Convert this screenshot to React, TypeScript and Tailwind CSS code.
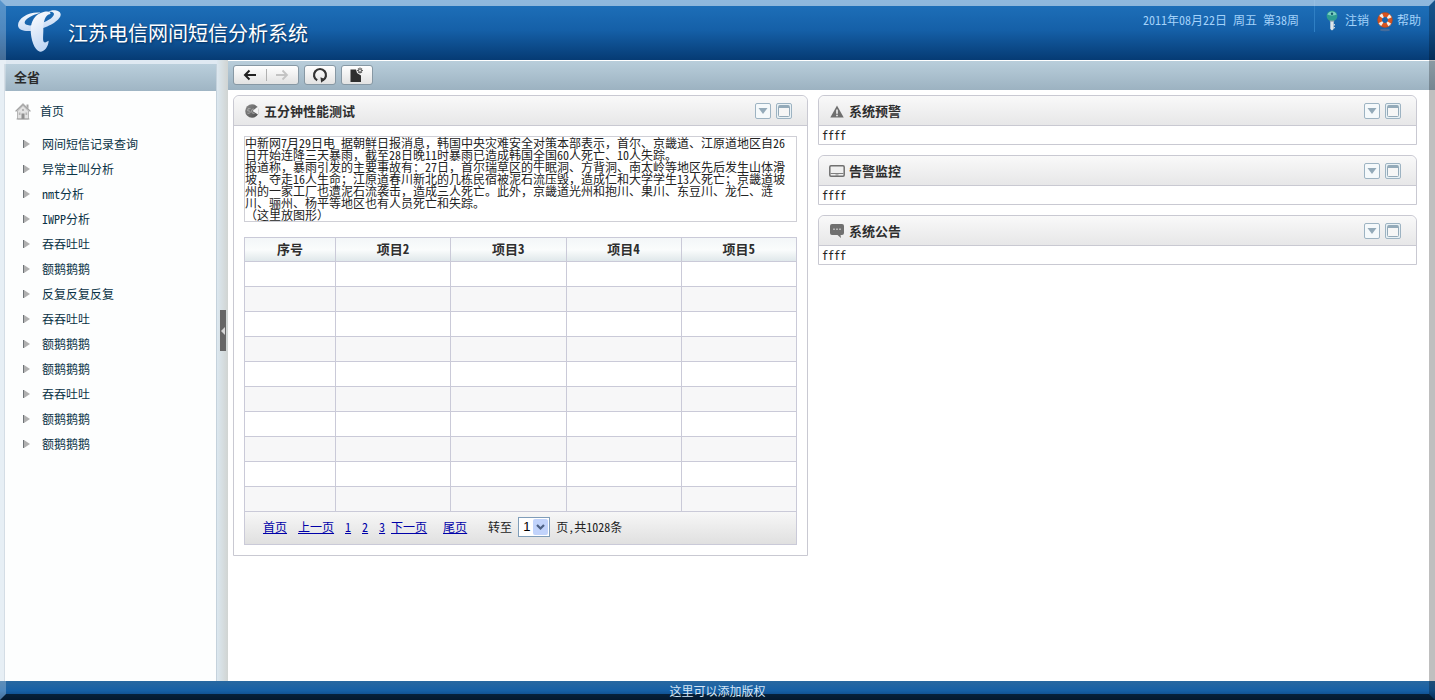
import React, { useState } from "react";

const menu = [
  "网间短信记录查询",
  "异常主叫分析",
  "nmt分析",
  "IWPP分析",
  "吞吞吐吐",
  "额鹅鹅鹅",
  "反复反复反复",
  "吞吞吐吐",
  "额鹅鹅鹅",
  "额鹅鹅鹅",
  "吞吞吐吐",
  "额鹅鹅鹅",
  "额鹅鹅鹅",
];

const news = [
  "中新网7月29日电 据朝鲜日报消息，韩国中央灾难安全对策本部表示，首尔、京畿道、江原道地区自26",
  "日开始连降三天暴雨，截至28日晚11时暴雨已造成韩国全国60人死亡、10人失踪。",
  "报道称，暴雨引发的主要事故有：27日，首尔瑞草区的牛眠洞、方背洞、南太岭等地区先后发生山体滑",
  "坡，夺走16人生命；江原道春川新北的几栋民宿被泥石流压毁，造成仁和大学学生13人死亡；京畿道坡",
  "州的一家工厂也遭泥石流袭击，造成三人死亡。此外，京畿道光州和抱川、果川、东豆川、龙仁、涟",
  "川、骊州、杨平等地区也有人员死亡和失踪。",
  "（这里放图形）",
].join("\n");

const columns = ["序号", "项目2", "项目3", "项目4", "项目5"];

function Logo() {
  return (
    <svg width="52" height="50" viewBox="0 0 156 150" aria-hidden="true">
      <defs>
        <linearGradient id="logo" x1="0" y1="0" x2="0.3" y2="1">
          <stop offset="0" stopColor="#ffffff" />
          <stop offset="1" stopColor="#c3d8f4" />
        </linearGradient>
      </defs>
      <g fill="url(#logo)">
        <path d="M80 20C45 16 12 36 12 58C13 79 50 78 76 70C108 61 142 41 140 24C138 10 110 10 103 18C114 16 123 20 119 28C113 41 85 53 60 57C42 60 31 57 32 49C34 38 52 28 80 20Z" />
        <path d="M82 20C100 13 112 17 109 24C94 25 87 48 88 72C88 90 85 105 91 109C95 111 99 105 104 104C103 122 91 138 78 137C61 134 50 100 50 70C51 45 63 26 82 20Z" />
      </g>
    </svg>
  );
}

function KeyIcon() {
  return (
    <svg width="14" height="22" viewBox="0 0 14 22" aria-hidden="true">
      <circle cx="7" cy="6" r="5.400" fill="#2d9d92" />
      <path d="M2.400 4.500a5 5 0 0 1 9.200 0Q7 6.500 2.400 4.500Z" fill="#7fd0c4" />
      <circle cx="7" cy="3.800" r="1.200" fill="#125a6b" />
      <path d="M5.300 11h3.400v8L7 20.500l-1.700-1.500Z" fill="#dfe6ea" />
      <path d="M8.500 14h1.500v1.500H8.500zM8.500 17h1.500v1.200H8.500z" fill="#c5d0d8" />
      <path d="M4.800 10.500h4.400v1.200H4.800z" fill="#8fa3b0" />
    </svg>
  );
}

function BuoyIcon() {
  return (
    <svg width="16" height="22" viewBox="0 0 16 22" aria-hidden="true">
      <ellipse cx="8" cy="20" rx="5" ry="1.200" fill="#8b7f8c" opacity="0.4" />
      <circle cx="8" cy="10" r="5.200" fill="none" stroke="#d9531e" strokeWidth="4.400" />
      <circle cx="8" cy="10" r="5.200" fill="none" stroke="#f4efe9" strokeWidth="4.400" strokeDasharray="2.700 5.468" strokeDashoffset="-2.700" />
      <circle cx="8" cy="10" r="7.400" fill="none" stroke="#a94822" strokeWidth="0.600" />
    </svg>
  );
}

function HomeIcon() {
  return (
    <svg width="16" height="17" viewBox="0 0 16 17" aria-hidden="true">
      <path d="M11.500 1.500h2v4h-2z" fill="#a5a5a5" />
      <path d="M2.500 8 8 2.500 13.500 8v8h-11Z" fill="#e2e2e2" stroke="#a8a8a8" strokeWidth="0.800" />
      <path d="M0.600 8.400 8 1.200l7.400 7.200" fill="none" stroke="#939393" strokeWidth="1.300" />
      <path d="M0.900 7.400 8 .7l7.100 6.700" fill="none" stroke="#d5d5d5" strokeWidth="0.600" />
      <path d="M6.500 10.500h3V16h-3z" fill="#8f8f8f" />
      <path d="M3.800 9.500h1.700v2.500H3.800zM10.500 9.500h1.700v2.500h-1.700zM7 6h2v2H7z" fill="#b5b5b5" />
      <path d="M1.500 16h13" stroke="#9a9a9a" strokeWidth="0.800" />
    </svg>
  );
}

function ChartIcon() {
  return (
    <svg width="14" height="14" viewBox="0 0 14 14" aria-hidden="true">
      <defs>
        <linearGradient id="ball" x1="0" y1="0" x2="1" y2="1">
          <stop offset="0" stopColor="#8c8c8c" />
          <stop offset="1" stopColor="#4c4c4c" />
        </linearGradient>
      </defs>
      <circle cx="7" cy="7" r="6.800" fill="url(#ball)" />
      <path d="M7.500 7 12.500 2.700Q14.800 7 13 10.500Z" fill="#f3f3f3" />
      <path d="M5.600 4.700H3l-.3 2.300Q5.400 6.300 5.300 8.200 5 9.800 2.400 9.200M9 5Q6.300 4.600 6.500 7.400 6.800 9.900 9.500 9.400" fill="none" stroke="#b5b5b5" strokeWidth="0.800" />
    </svg>
  );
}

function AlertIcon() {
  return (
    <svg width="14" height="13" viewBox="0 0 14 13" aria-hidden="true">
      <path d="M7 .5 13.700 12.500H.3Z" fill="#6e6e6e" />
      <path d="M6.200 4.500h1.600v4.200H6.200zM6.200 9.700h1.600v1.500H6.200z" fill="#f2f2f2" />
    </svg>
  );
}

function MonitorIcon() {
  return (
    <svg width="16" height="12" viewBox="0 0 16 12" aria-hidden="true">
      <rect x="0.800" y="0.800" width="14.400" height="10.400" rx="1.200" fill="#efefef" stroke="#707070" strokeWidth="1.500" />
      <path d="M1.500 8.500h13M6.500 10h3" stroke="#808080" strokeWidth="1" />
    </svg>
  );
}

function ChatIcon() {
  return (
    <svg width="14" height="14" viewBox="0 0 14 14" aria-hidden="true">
      <path d="M2 0h10q2 0 2 2v7q0 2-2 2h-1.500l.5 3L7.500 11H2Q0 11 0 9V2Q0 0 2 0Z" fill="#707070" />
      <path d="M3 4.500h2v1.500H3zM6 4.500h2v1.500H6zM9 4.500h2v1.500H9z" fill="#b5b5b5" />
    </svg>
  );
}

function Panel({
  title,
  icon,
  children,
}: {
  title: string;
  icon: React.ReactNode;
  children: React.ReactNode;
}) {
  const [open, setOpen] = useState(true);
  return (
    <section className="rounded-t-md border border-[#c9c9d2] bg-white">
      <header className="flex h-[30px] items-center rounded-t-md border-b border-[#c9c9d2] bg-linear-to-b from-[#f9f9f9] to-[#e7e7e8] pt-px pr-[15px] pl-[10px]">
        <span className="flex w-4 justify-center">{icon}</span>
        <h2 className="ml-1 flex-1 text-[13px] leading-4 font-bold text-[#2e2e2e]">{title}</h2>
        <div className="flex gap-[5px]">
          <button type="button" aria-label="收起" onClick={() => setOpen(!open)}>
            <svg width="16" height="16" viewBox="0 0 16 16">
              <rect x="0.500" y="0.500" width="15" height="15" rx="1.500" fill="#f5f9fb" stroke="#9db3c2" />
              <path d="M3.500 5h9L8 11Z" fill="#94aab9" />
            </svg>
          </button>
          <button type="button" aria-label="最大化">
            <svg width="16" height="16" viewBox="0 0 16 16">
              <rect x="0.500" y="0.500" width="15" height="15" rx="1.500" fill="#e9f1f5" stroke="#9db3c2" />
              <rect x="2.500" y="2.500" width="11" height="11" rx="1" fill="#f6f6f6" stroke="#94aab9" />
              <path d="M3 2.500h10v2.500H3z" fill="#94aab9" />
            </svg>
          </button>
        </div>
      </header>
      {open && children}
    </section>
  );
}

const toolButton =
  "flex h-5 items-center justify-center rounded-[3px] border border-[#8798a4] bg-linear-to-b from-white to-[#e2e2e2]";

export default function App() {
  return (
    <div className="relative flex min-h-screen flex-col bg-[#dfe9f2] font-['Noto_Sans_Mono_CJK_SC','Noto_Sans_CJK_SC',sans-serif] text-xs text-[#222]">
      <header className="flex h-[60px] items-start justify-between bg-linear-to-b from-[#1f72bc] via-[#1560a8] to-[#063b74]">
        <div className="flex items-center pt-[6px] pl-[14px]">
          <Logo />
          <h1 className="pt-1 pl-[2px] text-xl leading-6 font-medium text-white [text-shadow:1px_1px_2px_#06305e]">
            江苏电信网间短信分析系统
          </h1>
        </div>
        <div className="flex text-[#a3d2fa]">
          <p className="pt-3 pr-4 leading-4 whitespace-pre">2011年08月22日 周五 第38周</p>
          <nav className="flex items-start pt-[10px] pr-[14px] pl-[10px] shadow-[-1px_0_0_#2f7fc4]">
            <a href="#logout" className="flex items-start gap-[6px]">
              <KeyIcon />
              <span className="pt-[2px] leading-4">注销</span>
            </a>
            <a href="#help" className="ml-2 flex items-start gap-1">
              <BuoyIcon />
              <span className="pt-[2px] leading-4">帮助</span>
            </a>
          </nav>
        </div>
      </header>

      <div className="flex flex-1">
        <aside className="mt-1 ml-1 w-[213px] border-r border-l border-[#c5d2dc] bg-[#fdfefe]">
          <h2 className="flex h-[27px] items-center bg-linear-to-b from-[#bacfdc] to-[#9fb5c4] pb-[2px] pl-[9px] text-[13px] font-bold text-[#2b2b2b]">
            全省
          </h2>
          <nav className="text-[#0b3346]">
            <a href="#home" className="flex h-10 items-center gap-[9px] pl-[10px]">
              <HomeIcon />
              <span>首页</span>
            </a>
            <ul>
              {menu.map((label, i) => (
                <li key={i}>
                  <a href="#item" className="flex h-[25px] items-center gap-[11px] pl-[18px]">
                    <svg width="8" height="8" viewBox="0 0 8 8" aria-hidden="true">
                      <path d="M1 0 7 4 1 8Z" fill="#b0b0b0" />
                      <path d="M0.500 0v8" stroke="#6f7478" />
                    </svg>
                    <span>{label}</span>
                  </a>
                </li>
              ))}
            </ul>
          </nav>
        </aside>

        <div className="flex w-[11px] justify-center bg-linear-to-r from-[#dce8f0] to-[#d0d4d2] pt-[250px]">
          <button type="button" aria-label="收起菜单" className="flex h-[41px] w-[6px] items-center bg-[#666]">
            <svg width="6" height="8" viewBox="0 0 6 8">
              <path d="M5 0v8L1 4Z" fill="#d6d6d6" />
            </svg>
          </button>
        </div>

        <main className="flex-1 bg-white">
          <div className="flex h-[30px] items-center gap-[5px] border-t border-white bg-linear-to-b from-[#b9cedb] to-[#9cb2c1] pb-[2px] pl-[5px]">
            <div className={toolButton + " w-[66px]"}>
              <button type="button" aria-label="后退" className="flex flex-1 justify-center">
                <svg width="14" height="12" viewBox="0 0 14 12">
                  <path d="M13 6H2.500M6.500 1.500 2 6l4.500 4.500" fill="none" stroke="#222" strokeWidth="2" />
                </svg>
              </button>
              <span className="h-3 border-l border-[#b0b0b0]" />
              <button type="button" aria-label="前进" className="flex flex-1 justify-center">
                <svg width="14" height="12" viewBox="0 0 14 12">
                  <path d="M1 6h10.500M7.500 1.500 12 6l-4.500 4.500" fill="none" stroke="#c4c4c4" strokeWidth="1.800" />
                </svg>
              </button>
            </div>
            <button type="button" aria-label="刷新" className={toolButton + " w-8"}>
              <svg width="16" height="16" viewBox="0 0 16 16">
                <path d="M5.200 13.300A6 6 0 1 1 10.800 13.300" fill="none" stroke="#333" strokeWidth="2.200" />
                <path d="M8.500 10.200 13.200 12.200 9.200 15.800Z" fill="#333" />
              </svg>
            </button>
            <button type="button" aria-label="新建" className={toolButton + " w-8"}>
              <svg width="16" height="16" viewBox="0 0 16 16">
                <path d="M1.500 2.500h5.500L8 6l4 2.500V15H1.500Z" fill="#2e2e2e" />
                <path d="M11 0.500v6M8 3.500h6M9 1.500l4 4M13 1.500l-4 4" stroke="#666" strokeWidth="1.200" />
                <circle cx="11" cy="3.500" r="1" fill="#eee" />
              </svg>
            </button>
          </div>

          <div className="grid grid-cols-[575fr_599fr] items-start gap-[10px] pt-[5px] pr-[18px] pl-[5px]">
            <Panel title="五分钟性能测试" icon={<ChartIcon />}>
              <div className="p-[10px]">
                <p className="border border-[#cfcfd6] leading-3 whitespace-pre">{news}</p>
                <table className="mt-[15px] w-full table-fixed border-collapse">
                  <colgroup>
                    <col className="w-[91px]" />
                    <col />
                    <col />
                    <col />
                    <col />
                  </colgroup>
                  <thead>
                    <tr className="h-6 bg-linear-to-b from-[#f3f6f8] via-[#fafcfc] to-[#dde6e9]">
                      {columns.map((c) => (
                        <th key={c} className="border border-[#cacad8] p-0 pb-[2px] text-[13px] leading-4 font-bold text-[#2e2e2e]">
                          {c}
                        </th>
                      ))}
                    </tr>
                  </thead>
                  <tbody>
                    {Array.from({ length: 10 }, (_, r) => (
                      <tr key={r} className="h-[25px] even:bg-[#f7f7f8]">
                        {columns.map((c) => (
                          <td key={c} className="border border-[#cacad8] p-0" />
                        ))}
                      </tr>
                    ))}
                  </tbody>
                </table>
                <div className="flex h-[33px] items-center border-x border-b border-[#cacad8] bg-linear-to-b from-[#f7f7f7] to-[#e0e0e0] pb-[2px] pl-[18px]">
                  <nav className="flex text-[#0000a8] underline">
                    <a href="#first">首页</a>
                    <a href="#prev" className="ml-[11px]">上一页</a>
                    <a href="#1" className="ml-[11px]">1</a>
                    <a href="#2" className="ml-[11px]">2</a>
                    <a href="#3" className="ml-[11px]">3</a>
                    <a href="#next" className="ml-[6px]">下一页</a>
                    <a href="#last" className="ml-4">尾页</a>
                  </nav>
                  <label htmlFor="page" className="ml-[21px]">转至</label>
                  <span className="relative ml-[6px] flex">
                    <select
                      id="page"
                      defaultValue="1"
                      className="h-5 w-8 appearance-none border border-[#7f9db9] bg-white pl-1 font-['Liberation_Sans',sans-serif] text-[13px] leading-4 text-black"
                    >
                      <option>1</option>
                      <option>2</option>
                      <option>3</option>
                    </select>
                    <svg className="pointer-events-none absolute top-[2px] right-[2px]" width="15" height="16" viewBox="0 0 15 16">
                      <rect width="15" height="16" rx="2" fill="#c1d3fb" />
                      <path d="M4 6l3.500 3.500L11 6" fill="none" stroke="#4d6185" strokeWidth="2.200" />
                    </svg>
                  </span>
                  <span className="ml-[6px]">页,共1028条</span>
                </div>
              </div>
            </Panel>

            <div className="flex flex-col gap-[10px]">
              <Panel title="系统预警" icon={<AlertIcon />}>
                <p className="pl-[3px] leading-[18px]">ffff</p>
              </Panel>
              <Panel title="告警监控" icon={<MonitorIcon />}>
                <p className="pl-[3px] leading-[18px]">ffff</p>
              </Panel>
              <Panel title="系统公告" icon={<ChatIcon />}>
                <p className="pl-[3px] leading-[18px]">ffff</p>
              </Panel>
            </div>
          </div>
        </main>
      </div>

      <footer className="flex h-[19px] items-center justify-center bg-linear-to-b from-[#2868a0] via-[#1660a6] to-[#0a3f76] text-[#d5e6f6]">
        <span className="relative z-10">这里可以添加版权</span>
      </footer>

      <div className="pointer-events-none absolute inset-0 border-[6px] border-t-white/50 border-r-black/25 border-b-black/60 border-l-white/25" />
    </div>
  );
}
